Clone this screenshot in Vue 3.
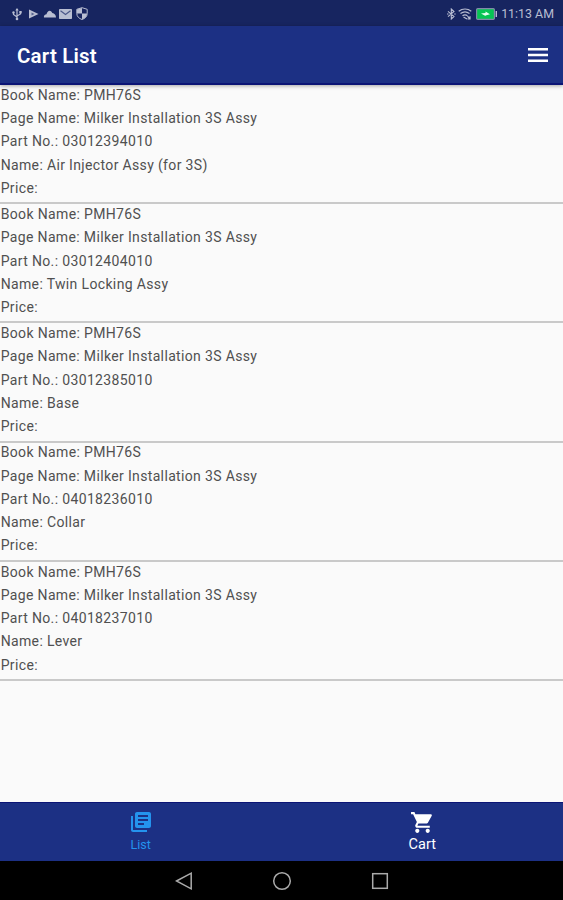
<script setup>
import { ref } from 'vue'

//DATA
const bookName = 'PMH76S'
const pageName = 'Milker Installation 3S Assy'

const items = ref([
  { partNo: '03012394010', name: 'Air Injector Assy (for 3S)', price: '' },
  { partNo: '03012404010', name: 'Twin Locking Assy', price: '' },
  { partNo: '03012385010', name: 'Base', price: '' },
  { partNo: '04018236010', name: 'Collar', price: '' },
  { partNo: '04018237010', name: 'Lever', price: '' }
])

const activeTab = ref('cart')
</script>

<template>
  <div class="screen">
    <div class="status-bar">
      <div class="notifications">
        <!-- usb -->
        <svg class="usb" width="12" height="14" viewBox="0 0 12 14" fill="none" stroke="currentColor" stroke-width="1.2">
          <path d="M6 2v10M2.500 6v1.500L6 10M9.500 5v2L6 9" />
          <path d="M4.300 3.500L6 1l1.700 2.500z" fill="currentColor" stroke="none" />
          <circle cx="6" cy="12" r="1.300" fill="currentColor" stroke="none" />
          <circle cx="2.500" cy="5.500" r="1.200" fill="currentColor" stroke="none" />
          <path d="M8.300 4h2.400v2.400H8.300z" fill="currentColor" stroke="none" />
        </svg>
        <!-- play store -->
        <svg class="play" width="11" height="10" viewBox="0 0 11 10">
          <path d="M1 0.500L10.500 5L1 9.500z" fill="currentColor" />
          <path d="M3.500 3.500l3 1.500-3 1.500z" fill="#54608f" />
        </svg>
        <!-- cloud -->
        <svg class="cloud" width="14" height="8" viewBox="0 0 14 8">
          <path d="M1 7.500C0.500 5.500 2 4.500 3.500 4.300C4.500 0.500 7.500 -0.500 9.300 3C11.500 3.500 13 5 13 7.500z" fill="currentColor" />
        </svg>
        <!-- mail -->
        <svg class="mail" width="13" height="10" viewBox="0 0 13 10">
          <rect width="13" height="10" rx="0.800" fill="currentColor" />
          <path d="M1.500 1.700L6.500 5.500L11.500 1.700" fill="none" stroke="#4c5889" stroke-width="1.200" />
        </svg>
        <!-- shield -->
        <svg class="shield" width="12" height="13" viewBox="0 0 12 13">
          <path d="M6 0.700L11.200 2.300V6.500C11.200 9.500 9 11.500 6 12.500C3 11.500 0.800 9.500 0.800 6.500V2.300z" fill="#17245f" stroke="currentColor" />
          <path d="M6 1v5.500H1V2.500zM6 6.500h5C11 9.500 9 11.300 6 12.300z" fill="currentColor" />
        </svg>
      </div>
      <div class="system">
        <svg class="bluetooth" width="9" height="12" viewBox="0 0 9 12" fill="none" stroke="currentColor" stroke-width="1.100">
          <path d="M1 3.300L7 8.500L4.300 11V1L7 3.500L1 8.700M0 6h1.500M7.200 6h1.500" />
        </svg>
        <svg class="wifi" width="14" height="12" viewBox="0 0 14 12" fill="none" stroke="currentColor" stroke-width="1.200">
          <path d="M0.700 3.300C4.500 0.300 9.500 0.300 13.300 3.300M2.500 5.500C5.500 3.300 8.500 3.300 11.500 5.500M4.500 7.700C6.300 6.500 7.700 6.500 9.500 7.700" />
          <path d="M5.500 9L9 11M9.500 8.200l2.500 2.800M12 8.200v2.800H9.500" />
        </svg>
        <svg class="battery" width="22" height="12" viewBox="0 0 22 12">
          <rect x="0.600" y="0.600" width="17.800" height="10.800" rx="1.200" fill="#06c553" stroke="#8189a8" stroke-width="1.200" />
          <path d="M5 5.500L9.500 5V3.500L14 6.300L9.500 7.500V8z" fill="#e6fff0" />
          <path d="M20.300 3v6" stroke="currentColor" stroke-width="1.400" />
        </svg>
        <span class="time">11:13 AM</span>
      </div>
    </div>

    <header class="app-bar">
      <h1>Cart List</h1>
      <button class="menu" aria-label="Menu">
        <svg width="20" height="14" viewBox="0 0 20 14" fill="#fff">
          <path d="M0 0h20v2.600H0zM0 5.700h20v2.600H0zM0 11.400h20V14H0z" />
        </svg>
      </button>
    </header>

    <main>
      <ul>
        <li v-for="item in items" :key="item.partNo">
          <p>Book Name: {{ bookName }}</p>
          <p>Page Name: {{ pageName }}</p>
          <p>Part No.: {{ item.partNo }}</p>
          <p>Name: {{ item.name }}</p>
          <p>Price: {{ item.price }}</p>
        </li>
      </ul>
    </main>

    <nav class="tabs">
      <button :class="{ active: activeTab === 'list' }" @click="activeTab = 'list'">
        <svg width="24" height="24" viewBox="0 0 24 24" fill="currentColor">
          <path d="M4 6H2v14c0 1.100.9 2 2 2h14v-2H4V6zm16-4H8c-1.100 0-2 .9-2 2v12c0 1.100.9 2 2 2h12c1.100 0 2-.9 2-2V4c0-1.100-.9-2-2-2zm-1 9H9V9h10v2zm-4 4H9v-2h6v2zm4-8H9V5h10v2z" />
        </svg>
        <span>List</span>
      </button>
      <button :class="{ active: activeTab === 'cart' }" @click="activeTab = 'cart'">
        <svg width="25" height="25" viewBox="0 0 24 24" fill="currentColor">
          <path d="M7 18c-1.100 0-1.990.9-1.990 2S5.900 22 7 22s2-.9 2-2-.9-2-2-2zM1 2v2h2l3.600 7.590-1.350 2.450c-.16.280-.25.610-.25.960 0 1.100.9 2 2 2h12v-2H7.420c-.14 0-.25-.11-.25-.25l.03-.12.900-1.630h7.450c.75 0 1.410-.41 1.750-1.030l3.580-6.490A1.003 1.003 0 0 0 20 4H5.210l-.94-2H1zm16 16c-1.100 0-1.990.9-1.990 2s.89 2 1.990 2 2-.9 2-2-.9-2-2-2z" />
        </svg>
        <span>Cart</span>
      </button>
    </nav>

    <div class="system-nav">
      <svg width="18" height="20" viewBox="0 0 18 20">
        <path d="M1.500 10L16.200 2.200V17.800z" />
      </svg>
      <svg width="20" height="20" viewBox="0 0 20 20">
        <circle cx="10" cy="10" r="8.300" />
      </svg>
      <svg width="18" height="20" viewBox="0 0 18 20">
        <rect x="1.700" y="2.700" width="14.600" height="14.600" />
      </svg>
    </div>
  </div>
</template>

<style>
body{
  margin:0;
  background:#fafafa;
}
</style>

<style scoped>
.screen{
  display:flex;
  flex-direction:column;
  height:900px;
  overflow:hidden;
  background:#fafafa;
  font-family:Roboto, sans-serif;
}
button{
  padding:0;
  border:0;
  background:none;
  font-family:inherit;
  cursor:pointer;
}
svg{
  display:block;
}

/* status bar */
.status-bar{
  display:flex;
  flex:none;
  justify-content:space-between;
  align-items:center;
  height:26px;
  padding:1px 9px 0 11px;
  box-sizing:border-box;
  background:#172560;
  color:#b9bed2;
}
.notifications, .system{
  display:flex;
  align-items:center;
}
.play{
  margin-left:5px;
}
.cloud{
  margin-left:4px;
}
.mail{
  margin-left:2px;
}
.shield{
  margin-left:4px;
}
.wifi{
  margin-left:2px;
}
.battery{
  margin-left:4px;
}
.time{
  margin-left:3px;
  font-size:12.400px;
  line-height:14px;
}

/* app bar */
.app-bar{
  position:relative;
  display:flex;
  flex:none;
  justify-content:space-between;
  align-items:center;
  height:59px;
  padding:0 15px 0 17px;
  box-sizing:border-box;
  border-bottom:2px solid #0b1475;
  background:#1c3084;
  box-shadow:0 1px 4px rgba(0, 0, 0, 0.35);
}
h1{
  margin:2px 0 0;
  color:#fff;
  font-size:20.500px;
  font-weight:600;
  line-height:24px;
  letter-spacing:0.200px;
}
.menu{
  margin-top:1px;
}

/* cart items */
main{
  flex:1;
  min-height:0;
}
ul{
  margin:0;
  padding:0;
  list-style:none;
}
li{
  display:flex;
  flex-direction:column;
  height:119.200px;
  padding-left:0.700px;
  box-sizing:border-box;
  border-bottom:2px solid #c9c9c9;
}
p{
  margin:0;
  color:#505050;
  font-size:14px;
  line-height:23.250px;
  letter-spacing:0.350px;
  white-space:nowrap;
}
p:first-child{
  margin-top:-1.200px;
}

/* bottom tabs */
.tabs{
  display:flex;
  flex:none;
  height:59px;
  box-sizing:border-box;
  border-top:1px solid #0b1475;
  background:#1c3084;
}
.tabs button{
  display:flex;
  flex:1;
  flex-direction:column;
  align-items:center;
  padding-top:7px;
  color:#2493ee;
  font-size:12.500px;
  line-height:16px;
}
.tabs span{
  margin-top:3px;
}
.tabs .active{
  color:#fff;
  font-size:14.500px;
}
.tabs .active span{
  margin-top:2px;
}

/* android navigation */
.system-nav{
  display:flex;
  flex:none;
  justify-content:center;
  align-items:center;
  gap:79px;
  height:39px;
  background:#000;
}
.system-nav svg{
  fill:none;
  stroke:#aaa;
  stroke-width:1.500;
}
</style>
